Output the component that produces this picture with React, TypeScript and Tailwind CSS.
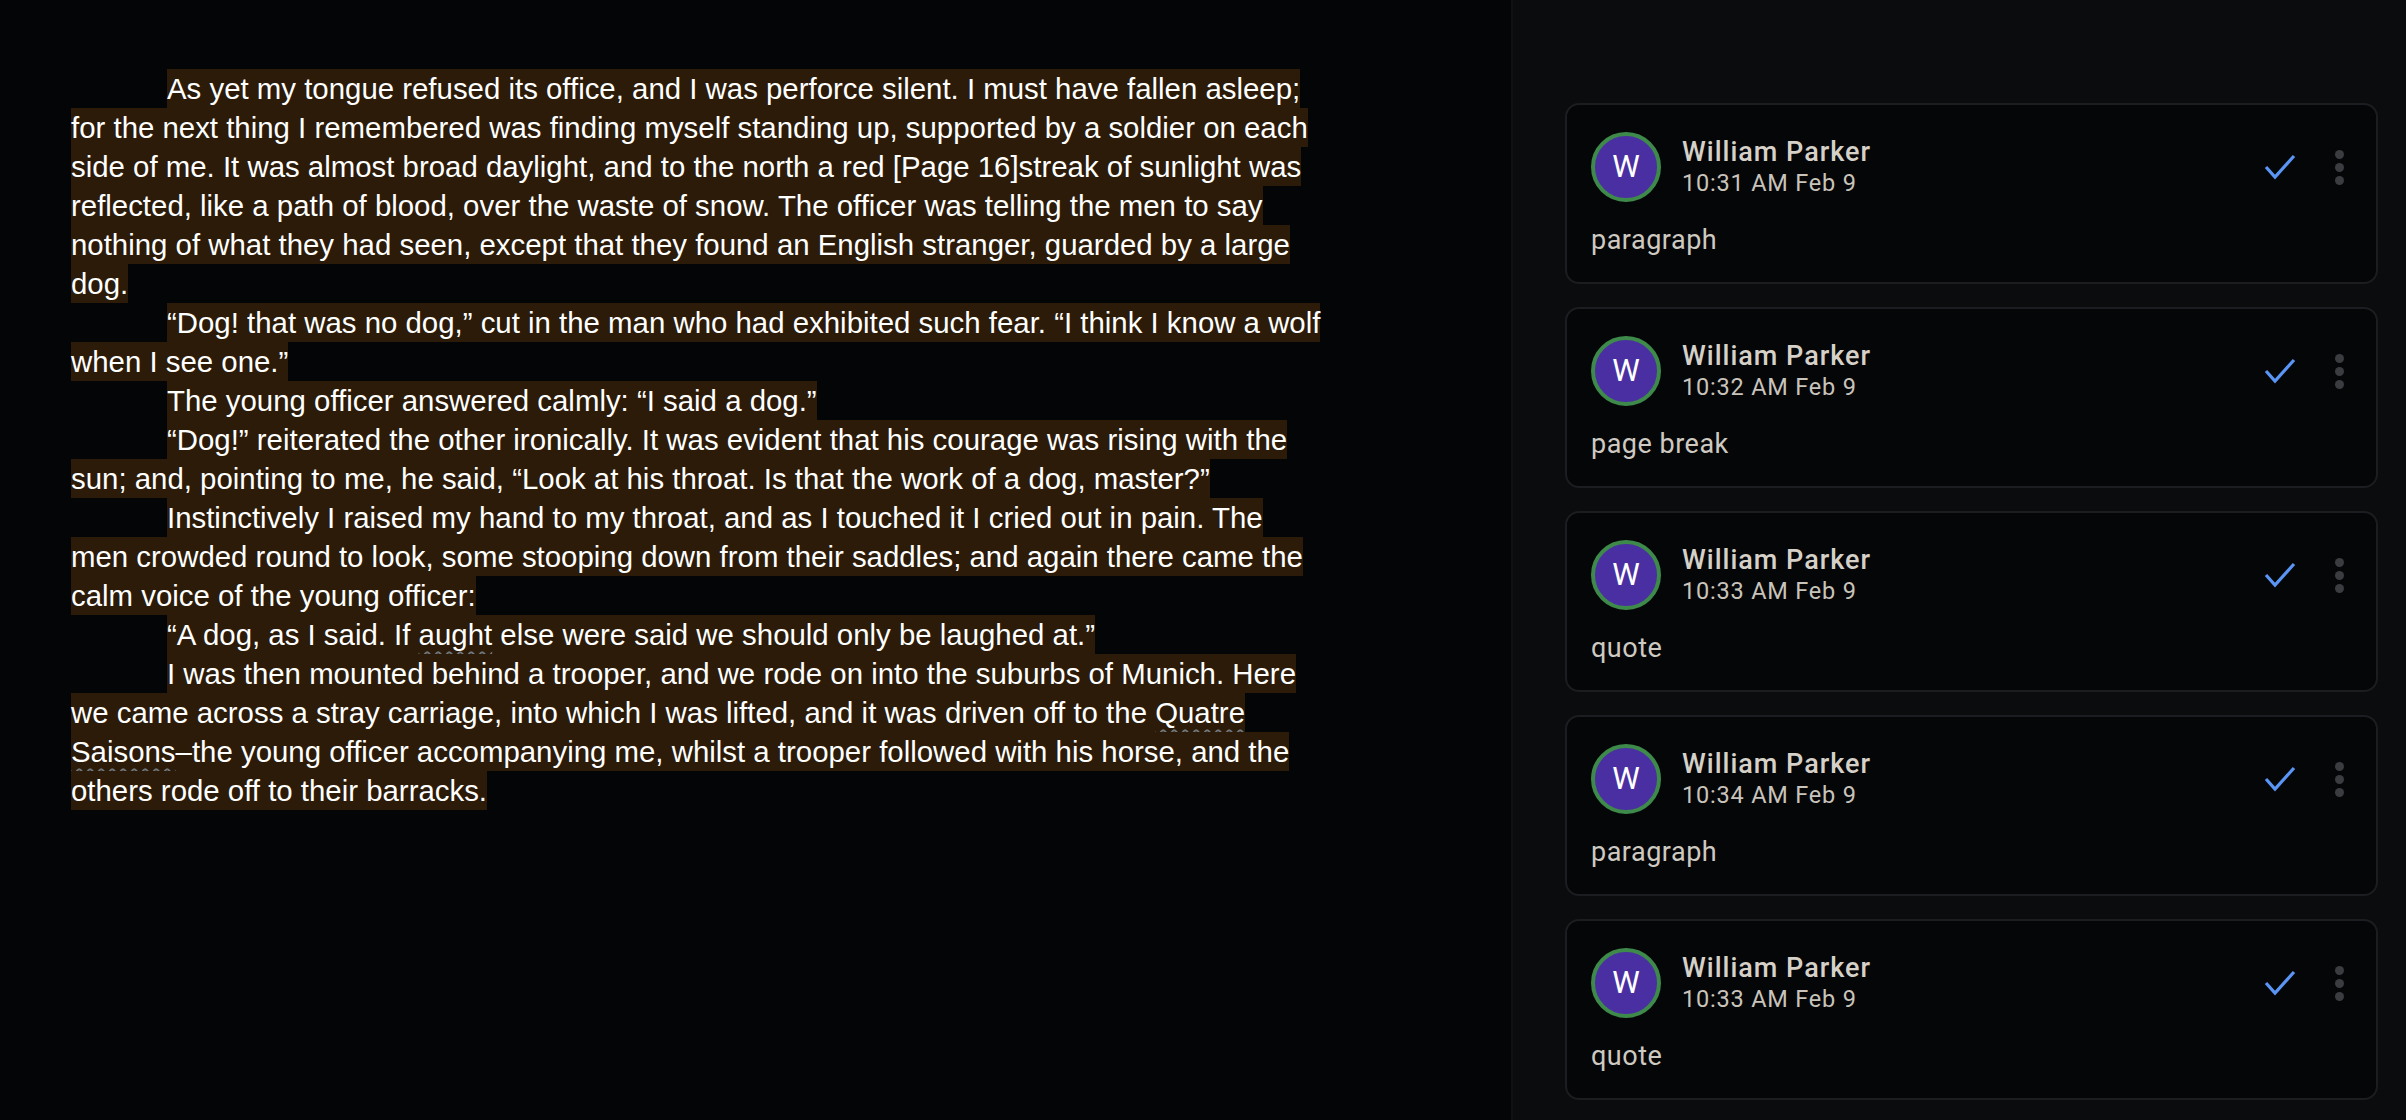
import type { FC, ReactNode } from "react";

const Hl: FC<{ children: ReactNode }> = ({ children }) => (
  <span className="bg-[#2b1b08] py-[3px]">{children}</span>
);

const Squiggle: FC<{ children: ReactNode }> = ({ children }) => (
  <span className="underline decoration-wavy decoration-[#6f767c] decoration-[2px] underline-offset-[6px]">
    {children}
  </span>
);

const Para: FC<{ children: ReactNode }> = ({ children }) => (
  <p className="indent-[96px]">
    <Hl>{children}</Hl>
  </p>
);

interface CommentProps {
  time: string;
  text: string;
}

const Comment: FC<CommentProps> = ({ time, text }) => (
  <div className="flex h-[181px] w-[813px] shrink-0 flex-col rounded-[14px] border-2 border-[#1b1d20] bg-[#050608] px-[24px] pt-[27px]">
    <div className="flex items-center">
      <div className="flex h-[70px] w-[70px] items-center justify-center rounded-full border-[4px] border-[#3e8a4a] bg-[#4a2fa2] text-[31px] text-white">
        W
      </div>
      <div className="ml-[21px] flex flex-col">
        <span className="text-[27px] font-medium leading-[32px] tracking-[1px] text-[#d6d1c8]">William Parker</span>
        <span className="text-[23.5px] leading-[30px] tracking-[0.8px] text-[#c9c4bb]">{time}</span>
      </div>
      <div className="ml-auto flex items-center gap-[38px] pr-[8px]">
        <svg width="34" height="30" viewBox="0 0 34 30" fill="none">
          <polyline points="3,15 12,25 31,4" stroke="#5a95f6" strokeWidth="3.2" />
        </svg>
        <div className="flex flex-col gap-[4px]">
          <span className="h-[9px] w-[9px] rounded-full bg-[#3a3c40]" />
          <span className="h-[9px] w-[9px] rounded-full bg-[#3a3c40]" />
          <span className="h-[9px] w-[9px] rounded-full bg-[#3a3c40]" />
        </div>
      </div>
    </div>
    <p className="mt-[22px] text-[27px] leading-[32px] tracking-[0.5px] text-[#cfcac1]">{text}</p>
  </div>
);

const comments: CommentProps[] = [
  { time: "10:31 AM Feb 9", text: "paragraph" },
  { time: "10:32 AM Feb 9", text: "page break" },
  { time: "10:33 AM Feb 9", text: "quote" },
  { time: "10:34 AM Feb 9", text: "paragraph" },
  { time: "10:33 AM Feb 9", text: "quote" },
];

const App: FC = () => {
  return (
    <div className="flex h-[1120px] w-full overflow-hidden bg-[#040507]">
      <div className="w-[1511px] shrink-0 pl-[71px] pt-[69px]">
        <div className="w-[1250px] font-['Liberation_Sans',Arial,sans-serif] text-[29.4px] leading-[39px] text-white">
          <Para>
            As yet my tongue refused its office, and I was perforce silent. I must have fallen asleep; for the next thing I remembered was finding myself standing up, supported by a soldier on each side of me. It was almost broad daylight, and to the north a red [Page 16]streak of sunlight was reflected, like a path of blood, over the waste of snow. The officer was telling the men to say nothing of what they had seen, except that they found an English stranger, guarded by a large dog.
          </Para>
          <Para>
            “Dog! that was no dog,” cut in the man who had exhibited such fear. “I think I know a wolf when I see one.”
          </Para>
          <Para>The young officer answered calmly: “I said a dog.”</Para>
          <Para>
            “Dog!” reiterated the other ironically. It was evident that his courage was rising with the sun; and, pointing to me, he said, “Look at his throat. Is that the work of a dog, master?”
          </Para>
          <Para>
            Instinctively I raised my hand to my throat, and as I touched it I cried out in pain. The men crowded round to look, some stooping down from their saddles; and again there came the calm voice of the young officer:
          </Para>
          <Para>
            “A dog, as I said. If <Squiggle>aught</Squiggle> else were said we should only be laughed at.”
          </Para>
          <Para>
            I was then mounted behind a trooper, and we rode on into the suburbs of Munich. Here we came across a stray carriage, into which I was lifted, and it was driven off to the <Squiggle>Quatre</Squiggle> <Squiggle>Saisons</Squiggle>–the young officer accompanying me, whilst a trooper followed with his horse, and the others rode off to their barracks.
          </Para>
        </div>
      </div>
      <div className="flex flex-1 flex-col gap-[23px] border-l-2 border-[#0f1113] bg-[#0a0c0e] pl-[52px] pt-[103px] font-['Roboto',sans-serif]">
        {comments.map((c, i) => (
          <Comment key={i} time={c.time} text={c.text} />
        ))}
      </div>
    </div>
  );
};

export default App;
